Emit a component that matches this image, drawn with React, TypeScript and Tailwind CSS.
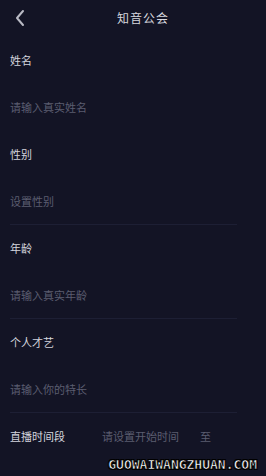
const sections = [
  { label: "姓名", placeholder: "请输入真实姓名", line: false },
  { label: "性别", placeholder: "设置性别", line: true },
  { label: "年龄", placeholder: "请输入真实年龄", line: true },
  { label: "个人才艺", placeholder: "请输入你的特长", line: true },
];

export default function App() {
  return (
    <div
      className="relative min-h-screen w-full overflow-hidden bg-[#131425] text-[11px]"
      style={{ fontFamily: '"Noto Sans CJK SC", "Noto Sans", sans-serif' }}
    >
      <header className="flex h-9 items-center px-[14px]">
        <svg width="20" height="20" viewBox="0 0 20 20" fill="none" className="shrink-0">
          <polyline
            points="9,3 3,10 9,17"
            stroke="#b9bac4"
            strokeWidth="2"
            strokeLinecap="round"
            strokeLinejoin="round"
          />
        </svg>
        <h1 className="flex-1 text-center text-[12px] font-normal tracking-[1px] text-[#d6d7de]">知音公会</h1>
      </header>

      <main className="pt-3 pl-[10px]">
        {sections.map((s) => (
          <section key={s.label} className="mb-[11px]">
            <div className="flex h-6 items-center text-[#d4d5dd]">{s.label}</div>
            <div className="mt-[23px] flex h-6 items-center text-[#5b5d70]">{s.placeholder}</div>
            <div className={s.line ? "mt-[11px] mr-[29px] h-px bg-[#1d1f34]" : "mt-[11px] h-px"} />
          </section>
        ))}

        <section className="flex h-6 items-center">
          <span className="w-[92px] text-[#d4d5dd]">直播时间段</span>
          <span className="w-[98px] text-[#5b5d70]">请设置开始时间</span>
          <span className="text-[#5b5d70]">至</span>
        </section>
      </main>

      <div
        className="absolute right-[9px] bottom-[5px] text-[13px] font-bold leading-none text-white"
        style={{
          fontFamily: '"DejaVu Sans Mono", monospace',
          WebkitTextStroke: "0.6px #000",
          textShadow: "1px 1px 0 #000, -1px -1px 0 #000, 1px -1px 0 #000, -1px 1px 0 #000",
        }}
      >
        GUOWAIWANGZHUAN.COM
      </div>
    </div>
  );
}
